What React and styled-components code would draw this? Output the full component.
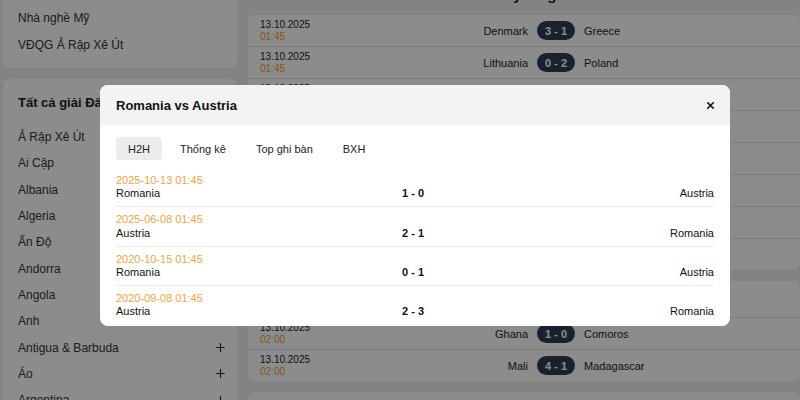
import React from 'react';
import styled, {createGlobalStyle} from 'styled-components';
import {Plus, X} from 'lucide-react';

const GlobalStyle = createGlobalStyle`
	html, body {
		margin: 0;
		padding: 0;
		background: #eeeeee;
		font-family: "Liberation Sans", Arial, sans-serif;
		color: #222;
		overflow: hidden;
	}
`;

const StyledPage = styled.div`
	display: flex;
	gap: 11px;
	padding-left: 3px;
	margin-top: -60px;
	width: 800px;
	box-sizing: border-box;
`;

const StyledSidebar = styled.div`
	width: 234px;
	flex-shrink: 0;
	display: flex;
	flex-direction: column;
	gap: 11px;
`;

const StyledCard = styled.div`
	background: #fff;
	border-radius: 8px;
	padding: ${p => p.$padding || '0'};
`;

const StyledCardTitle = styled.div`
	font-size: 13px;
	font-weight: 700;
	line-height: 18px;
	padding: 0 15px;
	margin-bottom: 12px;
`;

const StyledLeagueItem = styled.div`
	display: flex;
	justify-content: space-between;
	align-items: center;
	height: ${p => p.$height || 26.3}px;
	padding: 0 10px 0 15px;
	font-size: 12px;
	color: #333;
`;

const StyledMain = styled.div`
	flex: 1;
	display: flex;
	flex-direction: column;
	gap: 11px;
	margin-top: 45px;
`;

const StyledMainTitle = styled.div`
	font-size: 15px;
	font-weight: 700;
	line-height: 20px;
	text-align: center;
	padding: 0 0 9px 60px;
`;

const StyledGroupHeader = styled.div`
	height: 36px;
	display: flex;
	align-items: center;
	padding: 0 12px;
	font-size: 12px;
	font-weight: 700;
`;

const StyledMatchRow = styled.div`
	display: grid;
	grid-template-columns: 100px 1fr 38px 1fr 36px;
	column-gap: 9px;
	align-items: center;
	padding: 3px 12px;
	border-top: 1px solid #e6e6e6;
	height: 25px;
`;

const StyledDate = styled.div`
	font-size: 10px;
	line-height: 13px;
`;

const StyledTime = styled.div`
	font-size: 10px;
	line-height: 12px;
	color: #f29a30;
`;

const StyledTeam = styled.div`
	font-size: 11px;
	text-align: ${p => p.$align || 'left'};
	white-space: nowrap;
`;

const StyledBadge = styled.div`
	height: 19px;
	border-radius: 10px;
	background: #2c3e50;
	color: #fff;
	font-size: 11px;
	font-weight: 700;
	display: flex;
	align-items: center;
	justify-content: center;
`;

const StyledOverlay = styled.div`
	position: fixed;
	inset: 0;
	background: rgba(0, 0, 0, 0.45);
`;

const StyledModal = styled.div`
	position: absolute;
	left: 100px;
	top: 85px;
	width: 630px;
	background: #fff;
	border-radius: 8px;
	overflow: hidden;
`;

const StyledModalHeader = styled.div`
	height: 40px;
	background: #f3f3f3;
	display: flex;
	align-items: center;
	justify-content: space-between;
	padding: 0 16px;
`;

const StyledModalTitle = styled.div`
	font-size: 13px;
	font-weight: 700;
	color: #111;
`;

const StyledClose = styled.div`
	display: flex;
	color: #111;
	margin-right: -2px;
`;

const StyledModalBody = styled.div`
	padding: 12px 16px 1px;
`;

const StyledTabs = styled.div`
	display: flex;
	gap: 6px;
	margin-bottom: 8px;
`;

const StyledTab = styled.div`
	height: 23px;
	padding: 0 12px;
	border-radius: 4px;
	font-size: 11px;
	display: flex;
	align-items: center;
	background: ${p => p.$active ? '#ececec' : 'transparent'};
	color: #222;
`;

const StyledH2HRow = styled.div`
	padding: 6px 0;
	border-bottom: ${p => p.$last ? 'none' : '1px solid #ececec'};
	font-size: 11px;
	line-height: 13.2px;
`;

const StyledH2HDate = styled.div`
	color: #f4a43e;
`;

const StyledH2HLine = styled.div`
	display: grid;
	grid-template-columns: 1fr auto 1fr;
	color: #111;
`;

const StyledScore = styled.div`
	font-weight: 700;
	padding-right: 4px;
`;

const StyledAwayName = styled.div`
	text-align: right;
`;

const topLeagues = ['Ngoại hạng Anh', 'La Liga', 'Nhà nghề Mỹ', 'VĐQG Ả Rập Xê Út'];
const allLeagues = ['Ả Rập Xê Út', 'Ai Cập', 'Albania', 'Algeria', 'Ấn Độ', 'Andorra', 'Angola', 'Anh',
	'Antigua & Barbuda', 'Áo', 'Argentina', 'Armenia'];

const groupA = [
	['13.10.2025', '01:45', 'Denmark', '3 - 1', 'Greece'],
	['13.10.2025', '01:45', 'Lithuania', '0 - 2', 'Poland'],
	['13.10.2025', '01:45', 'Scotland', '2 - 1', 'Belarus'],
	['13.10.2025', '01:45', 'Romania', '1 - 0', 'Austria'],
	['13.10.2025', '01:45', 'Bosnia', '2 - 2', 'Cyprus'],
	['13.10.2025', '01:45', 'San Marino', '0 - 1', 'Moldova'],
	['13.10.2025', '01:45', 'Malta', '1 - 1', 'Finland'],
	['13.10.2025', '01:45', 'Latvia', '0 - 3', 'Serbia'],
];

const groupB = [
	['13.10.2025', '02:00', 'Ghana', '1 - 0', 'Comoros'],
	['13.10.2025', '02:00', 'Mali', '4 - 1', 'Madagascar'],
];

const h2h = [
	['2025-10-13 01:45', 'Romania', '1 - 0', 'Austria'],
	['2025-06-08 01:45', 'Austria', '2 - 1', 'Romania'],
	['2020-10-15 01:45', 'Romania', '0 - 1', 'Austria'],
	['2020-09-08 01:45', 'Austria', '2 - 3', 'Romania'],
];

const MatchRow = ({date, time, home, score, away}) => (
	<StyledMatchRow>
		<div>
			<StyledDate>{date}</StyledDate>
			<StyledTime>{time}</StyledTime>
		</div>
		<StyledTeam $align='right'>{home}</StyledTeam>
		<StyledBadge>{score}</StyledBadge>
		<StyledTeam>{away}</StyledTeam>
		<div/>
	</StyledMatchRow>
);

const App = () => {
	return (
		<>
			<GlobalStyle/>
			<StyledPage>
				<StyledSidebar>
					<StyledCard $padding='10px 0'>
						{topLeagues.map(name => (
							<StyledLeagueItem key={name} $height={27}>{name}</StyledLeagueItem>
						))}
					</StyledCard>
					<StyledCard $padding='15px 0 10px'>
						<StyledCardTitle>Tất cả giải Đấu</StyledCardTitle>
						{allLeagues.map(name => (
							<StyledLeagueItem key={name}>
								{name}
								<Plus size={13} strokeWidth={2.2} color='#222'/>
							</StyledLeagueItem>
						))}
					</StyledCard>
				</StyledSidebar>
				<StyledMain>
					<div>
						<StyledMainTitle>Tỷ số giải đấu</StyledMainTitle>
						<StyledCard>
							{groupA.map((m, i) => (
								<MatchRow key={i} date={m[0]} time={m[1]} home={m[2]} score={m[3]} away={m[4]}/>
							))}
						</StyledCard>
					</div>
					<StyledCard>
						<StyledGroupHeader>Vòng loại World Cup - Châu Phi</StyledGroupHeader>
						{groupB.map((m, i) => (
							<MatchRow key={i} date={m[0]} time={m[1]} home={m[2]} score={m[3]} away={m[4]}/>
						))}
					</StyledCard>
					<StyledCard>
						<StyledGroupHeader>Giao hữu quốc tế</StyledGroupHeader>
					</StyledCard>
				</StyledMain>
			</StyledPage>
			<StyledOverlay>
				<StyledModal>
					<StyledModalHeader>
						<StyledModalTitle>Romania vs Austria</StyledModalTitle>
						<StyledClose><X size={11} strokeWidth={3.5}/></StyledClose>
					</StyledModalHeader>
					<StyledModalBody>
						<StyledTabs>
							<StyledTab $active>H2H</StyledTab>
							<StyledTab>Thống kê</StyledTab>
							<StyledTab>Top ghi bàn</StyledTab>
							<StyledTab>BXH</StyledTab>
						</StyledTabs>
						{h2h.map((r, i) => (
							<StyledH2HRow key={i} $last={i === h2h.length - 1}>
								<StyledH2HDate>{r[0]}</StyledH2HDate>
								<StyledH2HLine>
									<div>{r[1]}</div>
									<StyledScore>{r[2]}</StyledScore>
									<StyledAwayName>{r[3]}</StyledAwayName>
								</StyledH2HLine>
							</StyledH2HRow>
						))}
					</StyledModalBody>
				</StyledModal>
			</StyledOverlay>
		</>
	);
};

export default App;
